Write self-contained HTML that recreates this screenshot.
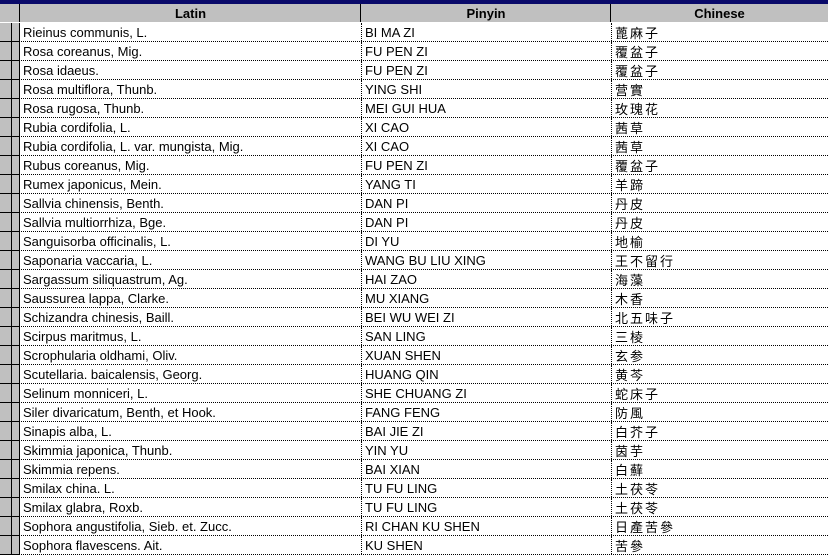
<!DOCTYPE html>
<html><head><meta charset="utf-8"><style>
*{margin:0;padding:0;box-sizing:border-box}
body{width:828px;height:556px;overflow:hidden;background:#fff;position:relative;font-family:"Liberation Sans",Arial,sans-serif;font-size:13px;color:#000}
#top{position:absolute;left:0;top:0;width:828px;height:4px;background:#0a0a6a}
#hdr{position:absolute;left:0;top:4px;width:828px;height:19px;background:#c0c0c0;border-bottom:1px solid #fff}
.h{position:absolute;top:0;height:18px;text-align:center;font-weight:bold;font-size:13px;line-height:20px;border-left:1px solid #000}
.row{position:absolute;left:0;width:828px;height:19px;border-bottom:1px dotted #000}
.g{position:absolute;left:0;top:0;width:20px;height:19px;background:#c0c0c0;border-bottom:1px solid #000}
.g:before{content:"";position:absolute;left:11px;top:0;width:1px;height:19px;background:#000}
.g:after{content:"";position:absolute;left:19px;top:0;width:1px;height:19px;background:#000}
.c{position:absolute;top:0;height:18px;line-height:20px;white-space:nowrap;overflow:hidden}
.c1{left:23px}
.c2{left:361px;padding-left:3px;border-left:1px dotted #000;width:250px}
.c3{left:611px;padding-left:3px;border-left:1px dotted #000;width:217px;font-family:"Noto Sans CJK SC","WenQuanYi Zen Hei",sans-serif;letter-spacing:2px;font-size:13px;line-height:19px}
</style></head><body>
<div id="top"></div>
<div id="hdr">
<div class="h" style="left:19px;width:342px">Latin</div>
<div class="h" style="left:360px;width:251px">Pinyin</div>
<div class="h" style="left:610px;width:218px">Chinese</div>
</div>
<div id="rows"></div>
<script>
var d=[["Rieinus communis, L.","BI MA ZI","蓖麻子"],["Rosa coreanus, Mig.","FU PEN ZI","覆盆子"],["Rosa idaeus.","FU PEN ZI","覆盆子"],["Rosa multiflora, Thunb.","YING SHI","营實"],["Rosa rugosa, Thunb.","MEI GUI HUA","玫瑰花"],["Rubia cordifolia, L.","XI CAO","茜草"],["Rubia cordifolia, L. var. mungista, Mig.","XI CAO","茜草"],["Rubus coreanus, Mig.","FU PEN ZI","覆盆子"],["Rumex japonicus, Mein.","YANG TI","羊蹄"],["Sallvia chinensis, Benth.","DAN PI","丹皮"],["Sallvia multiorrhiza, Bge.","DAN PI","丹皮"],["Sanguisorba officinalis, L.","DI YU","地榆"],["Saponaria vaccaria, L.","WANG BU LIU XING","王不留行"],["Sargassum siliquastrum, Ag.","HAI ZAO","海藻"],["Saussurea lappa, Clarke.","MU XIANG","木香"],["Schizandra chinesis, Baill.","BEI WU WEI ZI","北五味子"],["Scirpus maritmus, L.","SAN LING","三棱"],["Scrophularia oldhami, Oliv.","XUAN SHEN","玄参"],["Scutellaria. baicalensis, Georg.","HUANG QIN","黄芩"],["Selinum monniceri, L.","SHE CHUANG ZI","蛇床子"],["Siler divaricatum, Benth, et Hook.","FANG FENG","防風"],["Sinapis alba, L.","BAI JIE ZI","白芥子"],["Skimmia japonica, Thunb.","YIN YU","茵芋"],["Skimmia repens.","BAI XIAN","白蘚"],["Smilax china. L.","TU FU LING","土茯苓"],["Smilax glabra, Roxb.","TU FU LING","土茯苓"],["Sophora angustifolia, Sieb. et. Zucc.","RI CHAN KU SHEN","日產苦參"],["Sophora flavescens. Ait.","KU SHEN","苦參"]];
var h="";d.forEach(function(r,i){h+='<div class="row" style="top:'+(23+19*i)+'px"><div class="g"></div><div class="c c1">'+r[0]+'</div><div class="c c2">'+r[1]+'</div><div class="c c3">'+r[2]+'</div></div>';});
document.getElementById("rows").innerHTML=h;
</script>
</body></html>
